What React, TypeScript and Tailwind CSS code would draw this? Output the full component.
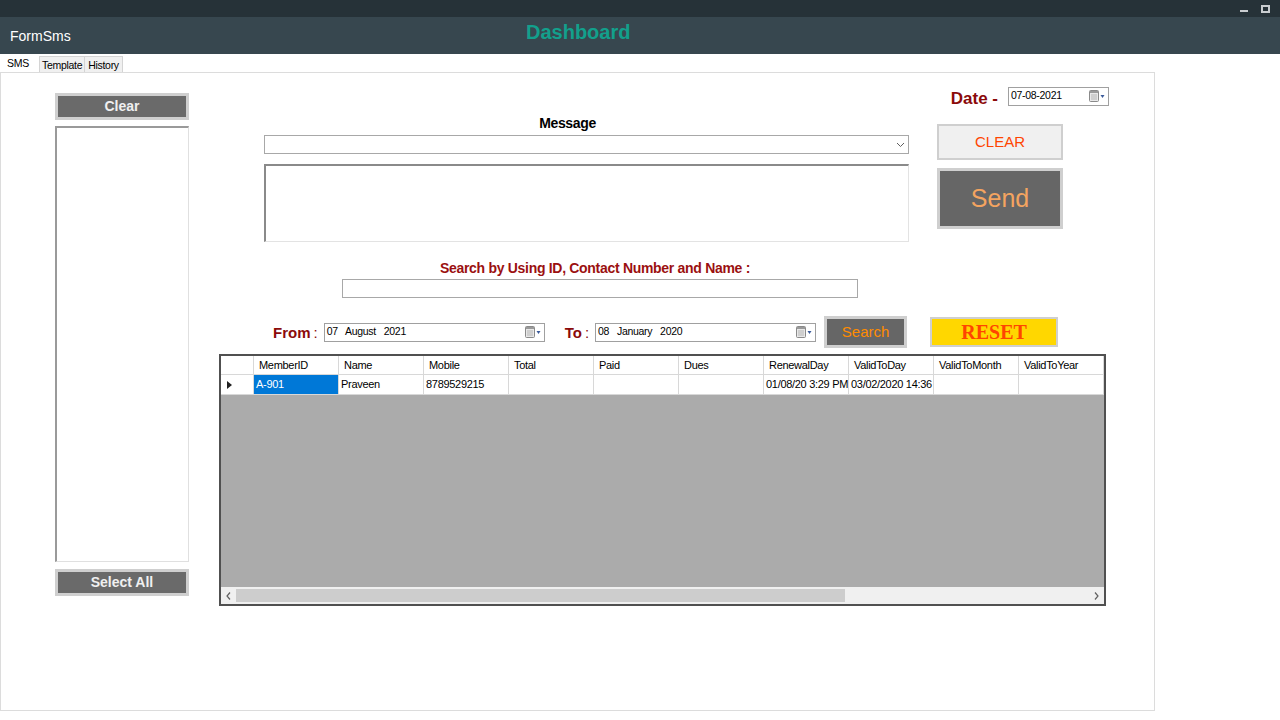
import React from 'react';

const font = { fontFamily: '"Liberation Sans", Arial, sans-serif' };

const columns = ['MemberID', 'Name', 'Mobile', 'Total', 'Paid', 'Dues', 'RenewalDay', 'ValidToDay', 'ValidToMonth', 'ValidToYear'];
const row = ['A-901', 'Praveen', '8789529215', '', '', '', '01/08/20 3:29 PM', '03/02/2020 14:36', '', ''];

function CalendarIcon() {
    return (
        <svg width="18" height="12" viewBox="0 0 18 12" className="shrink-0">
            <rect x="1.5" y="0.5" width="9" height="11" rx="1" fill="#e8e8e8" stroke="#8a8a8a" />
            <rect x="2" y="1" width="8" height="2" fill="#9a9a9a" />
            <line x1="3" y1="5" x2="9" y2="5" stroke="#b5b5b5" />
            <line x1="3" y1="7" x2="9" y2="7" stroke="#b5b5b5" />
            <line x1="3" y1="9" x2="9" y2="9" stroke="#b5b5b5" />
            <path d="M12.5 5 L16.5 5 L14.5 8 Z" fill="#3a5a9a" />
        </svg>
    );
}

function DatePicker({ value, width }: { value: React.ReactNode; width: string }) {
    return (
        <div className={`${width} h-[19px] border border-[#a0a0a0] bg-white flex items-center justify-between pl-[2px] pr-[2px] text-[10.5px] tracking-[-0.3px] text-black`}>
            <span className="whitespace-pre">{value}</span>
            <CalendarIcon />
        </div>
    );
}

function GrayButton({ label, className }: { label: string; className?: string }) {
    return (
        <div className={`border-[3px] border-[#cfcfcf] bg-[#6a6a6a] flex items-center justify-center ${className ?? ''}`}>
            <span className="text-white/90 font-bold text-[14px]">{label}</span>
        </div>
    );
}

export default function App() {
    return (
        <div className="w-[1280px] h-[720px] bg-white overflow-hidden flex flex-col" style={font}>
            {/* Window title strip */}
            <div className="h-[17px] bg-[#263238] flex items-center justify-end pr-[10px] gap-[13px]">
                <div className="w-[8px] h-[2px] bg-[#c9cdd0] mt-[4px]" />
                <div className="w-[9px] h-[8px] border-2 border-[#c9cdd0]" />
            </div>

            {/* Header */}
            <div className="h-[37px] bg-[#37474f] flex items-center relative">
                <span className="ml-[10px] text-white text-[14px] mt-[2px]">FormSms</span>
                <span className="absolute left-[526px] top-0 text-[#12a08c] font-bold text-[20px]">Dashboard</span>
            </div>

            {/* Tabs */}
            <div className="h-[18px] flex items-end text-[10.5px] tracking-[-0.3px]">
                <div className="h-[18px] w-[39px] bg-white pl-[7px] pt-[2px] text-black">SMS</div>
                <div className="h-[16px] border border-b-0 border-[#d4d4d4] bg-[#f0f0f0] px-[2px] pt-[1px] text-black">Template</div>
                <div className="h-[16px] border border-b-0 border-l-0 border-[#d4d4d4] bg-[#f0f0f0] px-[3px] pt-[1px] text-black">History</div>
            </div>

            {/* Tab page */}
            <div className="w-[1155px] h-[639px] border border-[#dcdcdc] flex">
                {/* Left column */}
                <div className="ml-[54px] pt-[20px] w-[134px] flex flex-col">
                    <GrayButton label="Clear" className="h-[27px]" />
                    <div className="mt-[6px] h-[436px] border border-[#e0e0e0] border-t-2 border-l-2 border-t-[#9a9a9a] border-l-[#9a9a9a] bg-white" />
                    <GrayButton label="Select All" className="mt-[7px] h-[27px]" />
                </div>

                {/* Right region */}
                <div className="ml-[30px] w-[890px] flex flex-col">
                    {/* Date */}
                    <div className="h-[20px] mt-[13px] flex items-center justify-end gap-[10px]">
                        <span className="text-[#8b0a0a] font-bold text-[17px] pt-[5px]">Date -</span>
                        <DatePicker value="07-08-2021" width="w-[101px]" />
                    </div>

                    <div className="flex">
                        {/* Message */}
                        <div className="ml-[45px] w-[645px] flex flex-col">
                            <div className="mt-[9px] h-[16px] flex items-center justify-center pr-[38px] text-black font-bold text-[14px] tracking-tight">Message</div>
                            <div className="mt-[4px] h-[19px] border border-[#a8a8a8] bg-white flex items-center justify-end pr-[3px]">
                                <svg width="9" height="6" viewBox="0 0 9 6">
                                    <path d="M1 1 L4.5 4.5 L8 1" fill="none" stroke="#606060" strokeWidth="1" />
                                </svg>
                            </div>
                            <div className="mt-[10px] h-[78px] border border-[#e3e3e3] border-t-2 border-l-2 border-t-[#8a8a8a] border-l-[#8a8a8a] bg-white" />
                        </div>

                        {/* Buttons */}
                        <div className="ml-[28px] w-[126px] flex flex-col">
                            <div className="mt-[18px] h-[36px] border-[2px] border-[#cfcfcf] bg-[#f0f0f0] flex items-center justify-center">
                                <span className="text-[#ff4500] text-[15px]">CLEAR</span>
                            </div>
                            <div className="mt-[8px] h-[61px] border-[3px] border-[#cfcfcf] bg-[#666666] flex items-center justify-center">
                                <span className="text-[#f4a460] text-[25px]">Send</span>
                            </div>
                        </div>
                    </div>

                    {/* Search */}
                    <div className="ml-[123px] w-[516px] flex flex-col mt-[18px]">
                        <div className="h-[16px] flex items-center justify-center pr-[10px] text-[#9b1010] font-bold text-[14px] tracking-[-0.3px]">Search by Using ID, Contact Number and Name :</div>
                        <div className="mt-[3px] h-[19px] border border-[#a8a8a8] bg-white" />
                    </div>

                    {/* From / To row */}
                    <div className="mt-[18px] h-[32px] flex items-center">
                        <span className="ml-[54px] text-[#8b0a0a] font-bold text-[15px] pt-[2px]">From</span>
                        <span className="ml-[3px] text-[#8b0a0a] text-[15px] pt-[2px]">:</span>
                        <div className="ml-[6px]">
                            <DatePicker value="07   August   2021" width="w-[221px]" />
                        </div>
                        <span className="ml-[20px] text-[#8b0a0a] font-bold text-[15px] pt-[2px]">To</span>
                        <span className="ml-[3px] text-[#8b0a0a] text-[15px] pt-[2px]">:</span>
                        <div className="ml-[6px]">
                            <DatePicker value="08   January   2020" width="w-[221px]" />
                        </div>
                        <div className="ml-[8px] w-[83px] h-[32px] border-[3px] border-[#cfcfcf] bg-[#666666] flex items-center justify-center">
                            <span className="text-[#ff8c00] text-[15px]">Search</span>
                        </div>
                        <div className="ml-[23px] w-[128px] h-[30px] border-[2px] border-[#cfcfcf] bg-[#ffd700] flex items-center justify-center">
                            <span className="text-[#ff4500] font-bold text-[20px]" style={{ fontFamily: '"Liberation Serif", "Times New Roman", serif' }}>RESET</span>
                        </div>
                    </div>

                    {/* Grid */}
                    <div className="mt-[6px] w-[887px] h-[252px] border-2 border-[#505050] bg-[#ababab] flex flex-col text-[11px] tracking-[-0.3px] text-black">
                        <div className="flex h-[19px] bg-white">
                            <div className="w-[34px] border-r border-b border-[#d8d8d8]" />
                            {columns.map((c) => (
                                <div key={c} className="w-[85px] shrink-0 border-r border-b border-[#d8d8d8] pl-[5px] flex items-center">{c}</div>
                            ))}
                        </div>
                        <div className="flex h-[20px] bg-white">
                            <div className="w-[34px] border-r border-b border-[#d8d8d8] flex items-center pl-[6px]">
                                <svg width="5" height="8" viewBox="0 0 5 8"><path d="M0 0 L5 4 L0 8 Z" fill="#202020" /></svg>
                            </div>
                            {row.map((v, i) => (
                                <div
                                    key={i}
                                    className={`w-[85px] shrink-0 border-r border-b border-[#d8d8d8] pl-[2px] flex items-center whitespace-nowrap overflow-hidden ${i === 0 ? 'bg-[#0078d7] text-white' : ''}`}
                                >
                                    {v}
                                </div>
                            ))}
                        </div>
                        <div className="flex-1" />
                        {/* Horizontal scrollbar */}
                        <div className="h-[17px] bg-[#f0f0f0] flex items-center">
                            <div className="w-[15px] flex justify-center">
                                <svg width="5" height="8" viewBox="0 0 5 8"><path d="M4 0.5 L1 4 L4 7.5" fill="none" stroke="#606060" strokeWidth="1.2" /></svg>
                            </div>
                            <div className="w-[609px] h-[13px] bg-[#cdcdcd]" />
                            <div className="flex-1" />
                            <div className="w-[15px] flex justify-center">
                                <svg width="5" height="8" viewBox="0 0 5 8"><path d="M1 0.5 L4 4 L1 7.5" fill="none" stroke="#606060" strokeWidth="1.2" /></svg>
                            </div>
                        </div>
                    </div>
                </div>
            </div>
        </div>
    );
}
